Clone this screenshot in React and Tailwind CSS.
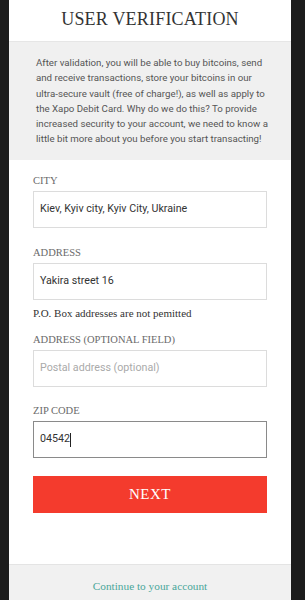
import React from "react";

const serif = { fontFamily: '"Liberation Serif", "DejaVu Serif", serif' };
const sans = { fontFamily: 'Roboto, "Liberation Sans", sans-serif' };

const intro = [
  "After validation, you will be able to buy bitcoins, send",
  "and receive transactions, store your bitcoins in our",
  "ultra-secure vault (free of charge!), as well as apply to",
  "the Xapo Debit Card. Why do we do this? To provide",
  "increased security to your account, we need to know a",
  "little bit more about you before you start transacting!",
];

const Label = ({ children, className = "" }) => (
  <div
    style={serif}
    className={`h-[15px] leading-[15px] text-[10.5px] text-[#6a6a6a] uppercase mb-[3px] ${className}`}
  >
    {children}
  </div>
);

const Field = ({ value, placeholder, focused, caret }) => (
  <div
    style={sans}
    className={`h-[37px] flex items-center px-[6px] text-[10.7px] bg-white border ${
      focused ? "border-[#8a8a8a]" : "border-[#dcdcdc]"
    }`}
  >
    {value ? (
      <span className="text-[#333]">{value}</span>
    ) : (
      <span className="text-[#aaa]">{placeholder}</span>
    )}
    {caret && <span className="w-px h-[14px] bg-[#222]" />}
  </div>
);

const App = () => {
  return (
    <div className="h-[600px] w-full overflow-hidden bg-[#1c1c1c] flex pl-[9px] pr-[14px]">
      <div className="flex-1 bg-white flex flex-col overflow-hidden">
        <header className="h-[42px] flex items-center justify-center border-b border-[#e6e6e6]">
          <h1 style={serif} className="text-[18px] text-[#333] tracking-[0.2px] -mt-[3px]">
            USER VERIFICATION
          </h1>
        </header>

        <div
          style={sans}
          className="bg-[#f0f0f0] h-[118px] pt-[13px] pl-[27px] pr-[12px] text-[9.7px] leading-[15.3px] text-[#555]"
        >
          {intro.map((line) => (
            <div key={line} className="whitespace-nowrap">
              {line}
            </div>
          ))}
        </div>

        <form className="px-[24px] pt-[13px]">
          <Label>City</Label>
          <Field value="Kiev, Kyiv city, Kyiv City, Ukraine" />

          <Label className="mt-[17px]">Address</Label>
          <Field value="Yakira street 16" />
          <div
            style={serif}
            className="mt-[6px] h-[14px] leading-[14px] text-[11px] text-[#333]"
          >
            P.O. Box addresses are not pemitted
          </div>

          <Label className="mt-[12px]">Address (optional field)</Label>
          <Field placeholder="Postal address (optional)" />

          <Label className="mt-[16px]">Zip code</Label>
          <Field value="04542" focused caret />

          <button
            type="button"
            style={serif}
            className="mt-[18px] w-full h-[37px] bg-[#f43b2d] text-white text-[15px] tracking-[0.5px]"
          >
            NEXT
          </button>
        </form>

        <div className="mt-auto h-[36px] bg-[#f1f1f1] border-t border-[#e4e4e4] flex items-center justify-center">
          <span style={serif} className="text-[11.3px] text-[#4aa79a] -mb-[8px]">
            Continue to your account
          </span>
        </div>
      </div>
    </div>
  );
};

export default App;
